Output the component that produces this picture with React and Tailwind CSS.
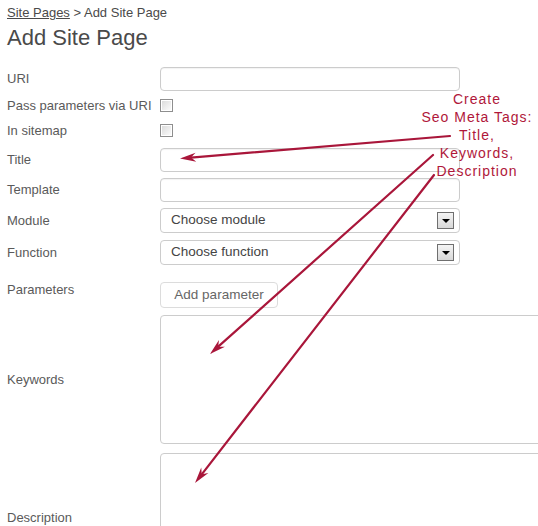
import React from "react";

const font = { fontFamily: '"Liberation Sans", Arial, sans-serif' };

function Label({ children, className = "" }) {
  return (
    <div className={`w-[153px] shrink-0 text-[13px] leading-[16px] text-[#5a5a5a] ${className}`}>
      {children}
    </div>
  );
}

function Input() {
  return (
    <div className="h-[24px] w-[300px] rounded-[4px] border border-[#cccccc] bg-white shadow-[inset_0_1px_1px_rgba(0,0,0,0.05)]" />
  );
}

function Checkbox() {
  return (
    <div className="h-[13px] w-[13px] border border-[#8e8e8e] bg-white p-[1px]">
      <div className="h-full w-full bg-gradient-to-br from-[#dcdcdc] to-[#fbfbfb]" />
    </div>
  );
}

function Select({ text }) {
  return (
    <div className="flex h-[25px] w-[300px] items-center justify-between rounded-[4px] border border-[#cccccc] bg-white pl-[10px] pr-[5px]">
      <span className="text-[13.5px] text-[#444]">{text}</span>
      <div className="flex h-[17px] w-[17px] items-center justify-center border border-[#6f6f6f] bg-gradient-to-b from-[#f4f4f4] to-[#d8d8d8]">
        <div className="h-0 w-0 border-l-[4px] border-r-[4px] border-t-[4px] border-l-transparent border-r-transparent border-t-black" />
      </div>
    </div>
  );
}

function Arrow({ x1, y1, x2, y2, color }) {
  const dx = x2 - x1;
  const dy = y2 - y1;
  const len = Math.hypot(dx, dy);
  const ux = dx / len;
  const uy = dy / len;
  const px = -uy;
  const py = ux;
  const L = 16;
  const W = 4.5;
  const N = 11;
  const bx = x2 - ux * L;
  const by = y2 - uy * L;
  const nx = x2 - ux * N;
  const ny = y2 - uy * N;
  const pts = [
    [x2, y2],
    [bx + px * W, by + py * W],
    [nx, ny],
    [bx - px * W, by - py * W],
  ]
    .map((p) => p.join(","))
    .join(" ");
  return (
    <g>
      <line x1={x1} y1={y1} x2={nx} y2={ny} stroke={color} strokeWidth="2.2" strokeLinecap="round" />
      <polygon points={pts} fill={color} />
    </g>
  );
}

export default function App() {
  const red = "#a9163a";
  return (
    <div className="relative h-[526px] w-[538px] overflow-hidden bg-white" style={font}>
      <div className="px-[7px] pt-[5px]">
        <div className="text-[13px] leading-[16px] text-[#4a4a4a]">
          <span className="underline">Site Pages</span> &gt; Add Site Page
        </div>
        <h1 className="mt-[4px] text-[22px] leading-[26px] text-[#4a4a4a]">Add Site Page</h1>

        <div className="mt-[16px] flex items-center">
          <Label>URI</Label>
          <Input />
        </div>
        <div className="mt-[8px] flex h-[13px] items-center">
          <Label>Pass parameters via URI</Label>
          <Checkbox />
        </div>
        <div className="mt-[12px] flex h-[13px] items-center">
          <Label>In sitemap</Label>
          <Checkbox />
        </div>
        <div className="mt-[11px] flex items-center">
          <Label>Title</Label>
          <Input />
        </div>
        <div className="mt-[6px] flex items-center">
          <Label>Template</Label>
          <Input />
        </div>
        <div className="mt-[6px] flex items-center">
          <Label>Module</Label>
          <Select text="Choose module" />
        </div>
        <div className="mt-[7px] flex items-center">
          <Label>Function</Label>
          <Select text="Choose function" />
        </div>
        <div className="mt-[17px] flex items-start">
          <Label>Parameters</Label>
          <div className="flex h-[26px] w-[118px] items-center justify-center rounded-[4px] border border-[#dcdcdc] bg-white text-[13.5px] text-[#666]">
            Add parameter
          </div>
        </div>
        <div className="mt-[7px] flex items-center">
          <Label>Keywords</Label>
          <div className="h-[129px] w-[420px] shrink-0 rounded-[4px] border border-[#cccccc] bg-white" />
        </div>
        <div className="mt-[9px] flex items-center">
          <Label>Description</Label>
          <div className="h-[130px] w-[420px] shrink-0 rounded-[4px] border border-[#cccccc] bg-white" />
        </div>
      </div>

      <svg className="pointer-events-none absolute left-0 top-0" width="538" height="526">
        <Arrow x1={450} y1={136} x2={180} y2={158.5} color={red} />
        <Arrow x1={433} y1={155} x2={210} y2={354} color={red} />
        <Arrow x1={434} y1={175} x2={195} y2={483} color={red} />
      </svg>

      <div className="absolute left-[477px] top-[90px] -translate-x-1/2 whitespace-nowrap text-center text-[14px] leading-[18px] tracking-[1px] text-[#b0173a]">
        <div>Create</div>
        <div>Seo Meta Tags:</div>
        <div>Title,</div>
        <div>Keywords,</div>
        <div>Description</div>
      </div>
    </div>
  );
}
